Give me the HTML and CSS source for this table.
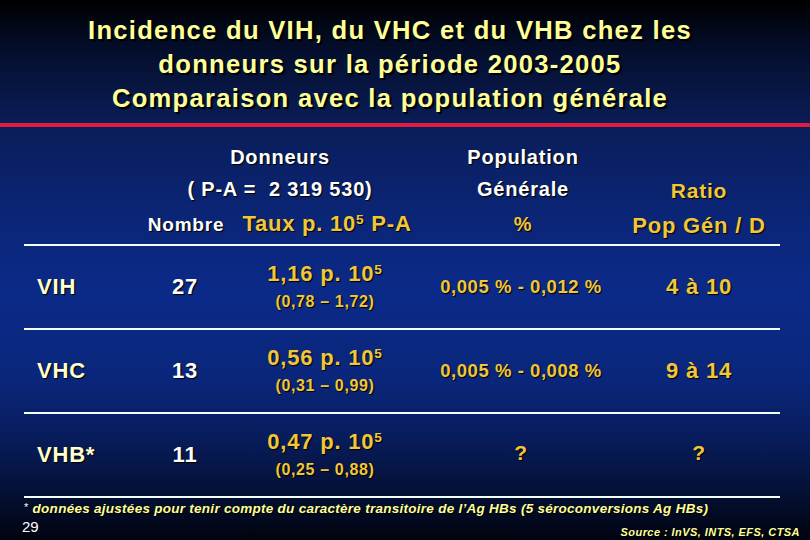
FILE: index.html
```html
<!DOCTYPE html>
<html lang="fr">
<head>
<meta charset="utf-8">
<title>Incidence du VIH, du VHC et du VHB</title>
<link rel="stylesheet" href="styles.css">
</head>
<body>
<div class="slide">
  <h1 class="title">Incidence du VIH, du VHC et du VHB chez les<br>donneurs sur la période 2003-2005<br>Comparaison avec la population générale</h1>
  <div class="rule-red"></div>

  <div class="table">
    <div class="head">
      <div class="h-donneurs">
        <div class="hline">Donneurs</div>
        <div class="hline">( P-A =&nbsp; 2 319 530)</div>
      </div>
      <div class="h-nombre">Nombre</div>
      <div class="h-taux gold"><span>Taux p. 10<span class="sup">5</span> P-A</span></div>
      <div class="h-pop">
        <div class="hline">Population</div>
        <div class="hline">Générale</div>
        <div class="hline gold pct">%</div>
      </div>
      <div class="h-ratio gold">
        <div class="hline">Ratio</div>
        <div class="hline">Pop Gén / D</div>
      </div>
    </div>

    <div class="row">
      <div class="c-label">VIH</div>
      <div class="c-num">27</div>
      <div class="c-taux gold">
        <div class="t-main">1,16 p. 10<span class="sup">5</span></div>
        <div class="t-ci">(0,78 – 1,72)</div>
      </div>
      <div class="c-pop gold">0,005 % - 0,012 %</div>
      <div class="c-ratio gold">4 à 10</div>
    </div>

    <div class="row">
      <div class="c-label">VHC</div>
      <div class="c-num">13</div>
      <div class="c-taux gold">
        <div class="t-main">0,56 p. 10<span class="sup">5</span></div>
        <div class="t-ci">(0,31 – 0,99)</div>
      </div>
      <div class="c-pop gold">0,005 % - 0,008 %</div>
      <div class="c-ratio gold">9 à 14</div>
    </div>

    <div class="row">
      <div class="c-label">VHB*</div>
      <div class="c-num">11</div>
      <div class="c-taux gold">
        <div class="t-main">0,47 p. 10<span class="sup">5</span></div>
        <div class="t-ci">(0,25 – 0,88)</div>
      </div>
      <div class="c-pop gold q">?</div>
      <div class="c-ratio gold q">?</div>
    </div>
  </div>

  <p class="note"><span class="star">*</span> données ajustées pour tenir compte du caractère transitoire de l’Ag HBs (5 séroconversions Ag HBs)</p>
  <div class="foot">
    <span class="pageno">29</span>
    <span class="source">Source : InVS, INTS, EFS, CTSA</span>
  </div>
</div>
</body>
</html>
```

FILE: styles.css
```css
html, body {
  margin: 0;
  padding: 0;
}

body {
  width: 810px;
  height: 540px;
  overflow: hidden;
  font-family: "Liberation Sans", Arial, sans-serif;
  background: linear-gradient(to bottom,
    #000000 0px,
    #040e2c 50px,
    #0a1d58 125px,
    #0b2472 200px,
    #0b2a88 290px,
    #0a267b 380px,
    #081c5a 440px,
    #041035 492px,
    #01040f 540px);
}

.slide {
  display: flex;
  flex-direction: column;
  height: 540px;
}

.title {
  margin: 13px 30px 0 0;
  font-size: 25.6px;
  line-height: 34px;
  font-weight: bold;
  letter-spacing: 0.05em;
  text-align: center;
  color: #ffff99;
  text-shadow: 2px 2px 1px #000;
}

.rule-red {
  height: 4px;
  margin-top: 8px;
  background: #e01c3f;
}

.gold {
  color: #f2c63a;
}

.table {
  margin: 14px 0 0 24px;
  width: 756px;
  letter-spacing: 0.05em;
  font-weight: bold;
}

.head {
  display: grid;
  grid-template-columns: 106px 110px 170px 222px 148px;
  grid-template-rows: 32px 32px 39px;
  border-bottom: 2px solid #f2ffff;
  color: #ffffff;
  text-shadow: 1px 1px 1px #000;
}

.hline {
  height: 32px;
  line-height: 32px;
}

.h-donneurs {
  grid-column: 2 / 4;
  grid-row: 1 / 3;
  padding-left: 20px;
  text-align: center;
  font-size: 20px;
}

.h-nombre {
  grid-column: 2;
  grid-row: 3;
  font-size: 19px;
  line-height: 39px;
  text-align: center;
  padding-left: 2px;
}

.h-taux {
  grid-column: 3;
  grid-row: 3;
  display: flex;
  justify-content: center;
  font-size: 22px;
  line-height: 37px;
  white-space: nowrap;
  letter-spacing: 0.035em;
  padding-left: 4px;
}

.h-pop {
  grid-column: 4;
  grid-row: 1 / 4;
  font-size: 20px;
  text-align: center;
  padding-left: 4px;
}

.h-pop .pct {
  height: 39px;
  line-height: 39px;
}

.h-ratio {
  grid-column: 5;
  grid-row: 2 / 4;
  font-size: 21px;
  text-align: center;
  padding-right: 14px;
}

.h-ratio .hline {
  height: 35px;
  line-height: 35px;
}

.h-ratio .hline + .hline {
  font-size: 22px;
}

.row {
  display: grid;
  grid-template-columns: 106px 110px 170px 222px 148px;
  height: 82px;
  align-items: center;
  border-bottom: 2px solid #f2ffff;
  text-shadow: 1px 1px 1px #000;
}

.c-label {
  padding-left: 13px;
  font-size: 22px;
  color: #ffffd0;
}

.c-num {
  text-align: center;
  font-size: 22px;
  color: #ffffff;
}

.c-taux {
  text-align: center;
}

.t-main {
  font-size: 22px;
  line-height: 28px;
}

.t-ci {
  font-size: 16px;
  line-height: 27px;
  letter-spacing: 0.04em;
}

.c-pop {
  text-align: center;
  font-size: 18.5px;
  letter-spacing: 0.03em;
}

.c-ratio {
  text-align: center;
  font-size: 22px;
  padding-right: 14px;
}

.q {
  font-size: 21px;
  margin-top: -4px;
}

.sup {
  font-size: 0.62em;
  vertical-align: 0.55em;
  line-height: 0;
}

.note {
  margin: 0 0 0 24px;
  font-size: 13.5px;
  line-height: 18px;
  font-weight: bold;
  font-style: italic;
  letter-spacing: 0.02em;
  color: #ffff99;
  text-shadow: 1px 1px 1px #000;
}

.star {
  font-weight: normal;
  font-style: normal;
  color: #ffffff;
  vertical-align: 2px;
  font-size: 11px;
}

.foot {
  display: flex;
  justify-content: space-between;
  align-items: baseline;
  padding: 0 10px 0 22px;
}

.pageno {
  font-size: 15px;
  color: #ffffff;
}

.source {
  font-size: 11px;
  font-weight: bold;
  font-style: italic;
  letter-spacing: 0.04em;
  color: #ffff99;
  text-shadow: 1px 1px 1px #000;
  position: relative;
  top: 4px;
}
```
